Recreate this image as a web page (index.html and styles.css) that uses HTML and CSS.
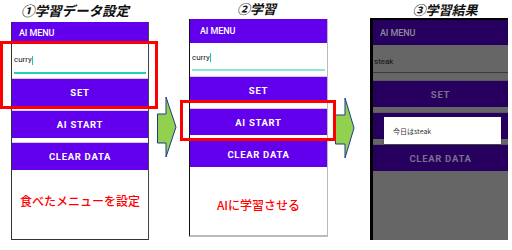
FILE: index.html
```html
<!DOCTYPE html>
<html lang="ja">
<head>
<meta charset="utf-8">
<title>AI MENU</title>
<link rel="stylesheet" href="styles.css">
</head>
<body>
<div class="page">
  <div class="col col1">
    <div class="title">①学習データ設定</div>
    <div class="phone">
      <div class="appbar">AI MENU</div>
      <div class="edit"><span class="input">curry</span><span class="caret"></span></div>
      <div class="btns">
        <div class="btn">SET</div>
        <div class="btn">AI START</div>
        <div class="btn">CLEAR DATA</div>
      </div>
      <div class="note">食べたメニューを設定</div>
    </div>
  </div>
  <div class="arrow-slot slot1">
    <svg class="arrow" width="20" height="62" viewBox="0 0 20 62"><polygon points="0.5,18 9,18 9,1 19,31 9,61 9,47 0.5,47" /></svg>
  </div>
  <div class="col col2">
    <div class="title">②学習</div>
    <div class="phone">
      <div class="appbar">AI MENU</div>
      <div class="edit"><span class="input">curry</span><span class="caret"></span></div>
      <div class="btns">
        <div class="btn">SET</div>
        <div class="btn">AI START</div>
        <div class="btn">CLEAR DATA</div>
      </div>
      <div class="note">AIに学習させる</div>
    </div>
  </div>
  <div class="arrow-slot slot2">
    <svg class="arrow" width="20" height="62" viewBox="0 0 20 62"><polygon points="0.5,18 10,18 10,1 19,31 10,61 10,47 0.5,47" /></svg>
  </div>
  <div class="col col3">
    <div class="title">③学習結果</div>
    <div class="phone dim">
      <div class="appbar">AI MENU</div>
      <div class="edit"><span class="input">steak</span></div>
      <div class="btns">
        <div class="btn">SET</div>
        <div class="btn"></div>
        <div class="btn">CLEAR DATA</div>
      </div>
      <div class="note"></div>
      <div class="dialog">今日はsteak</div>
    </div>
  </div>
  <div class="highlight hl1"></div>
  <div class="highlight hl2"></div>
</div>
</body>
</html>
```

FILE: styles.css
```css
* { box-sizing: border-box; }
html, body { margin: 0; padding: 0; background: #fff; }
body { width: 512px; height: 250px; overflow: hidden; font-family: Roboto, "Noto Sans CJK JP", sans-serif; }

.page { position: relative; display: flex; align-items: flex-start; padding-left: 11px; width: 512px; height: 250px; }

.col { display: flex; flex-direction: column; }
.col1 { width: 138px; }
.col2 { width: 139px; }
.col3 { width: 138px; }

.title {
  font-family: "Noto Sans CJK JP", sans-serif;
  font-weight: 700;
  font-style: italic;
  font-size: 13.5px;
  line-height: 20px;
  color: #111;
  text-align: center;
  white-space: nowrap;
  overflow: visible;
}
.col1 .title { height: 22px; padding-right: 10px; }
.col2 .title { height: 19px; line-height: 18px; padding-right: 4px; font-size: 13px; }
.col3 .title { height: 18px; padding-left: 12px; font-size: 13px; }

.phone { position: relative; display: flex; flex-direction: column; background: #fff; border-left: 1px solid #333; border-right: 1px solid #444; border-bottom: 1px solid #333; }
.col1 .phone { height: 218px; }
.col2 .phone { height: 218px; border-left: 1px solid #111; border-right: 1px solid #bbb; border-bottom: 2px solid #bbb; }

.appbar { background: #6200ee; color: #fff; font-size: 9px; font-weight: 500; display: flex; align-items: center; padding-left: 7px; letter-spacing: -0.1px; }
.col1 .appbar { height: 22px; }
.col2 .appbar { height: 24px; padding-left: 10px; }

.edit { position: relative; display: flex; align-items: center; padding-left: 2px; font-size: 8px; line-height: 10px; }
.edit::after { content: ""; position: absolute; left: 2px; right: 2px; height: 2px; background: #1fd0bd; }
.col1 .edit { height: 34px; padding-bottom: 2px; }
.col1 .edit::after { top: 28px; }
.col2 .edit { height: 33px; padding-bottom: 4px; }
.col2 .edit::after { top: 26px; background: #8ae6db; }
.input { font-size: 8px; color: #222; line-height: 10px; }
.caret { display: block; width: 1px; height: 9px; background: #1fc9b6; }

.btns { display: flex; flex-direction: column; gap: 4px; }
.col2 .btns { gap: 5px; }
.btn { height: 28px; background: #6200ee; border-top: 1px solid #d6c8f7; color: #fff; font-size: 9.5px; font-weight: 700; letter-spacing: 0.7px; display: flex; align-items: center; justify-content: center; }
.col2 .btn { height: 27px; }

.note { flex: 1; display: flex; justify-content: center; color: #f00; font-family: "Noto Sans CJK JP", sans-serif; font-weight: 500; font-size: 12px; line-height: 14px; }
.col1 .note { padding-top: 24px; }
.col2 .note { padding-top: 31px; }

/* dimmed (dialog shown) */
.col3 .phone { height: 222px; background: #666; border-left: 3px solid #000; border-top: 2px solid #000; border-right: none; border-bottom: none; }
.dim .appbar { height: 25px; background: #27005f; color: #8c8c99; padding-left: 7px; }
.dim .edit { height: 35px; background: #666; padding-left: 1px; padding-bottom: 2px; }
.dim .edit::after { top: 27px; left: 0; right: 0; height: 1px; background: #3a3a3a; }
.dim .input { color: #111; }
.dim .btns { gap: 5px; background: #666; }
.dim .btn { height: 27px; background: #27005f; border-top: 1px solid #5a5a62; color: #77708a; }
.dim .note { background: #666; }

.dialog { position: absolute; left: 11px; top: 97px; width: 117px; height: 27px; background: #fff; font-family: "Noto Sans CJK JP", sans-serif; font-size: 7px; color: #333; display: flex; align-items: center; padding-left: 9px; box-shadow: 0 1px 2px rgba(0,0,0,0.3); }

.arrow-slot { display: flex; justify-content: center; }
.slot1 { width: 40px; margin-top: 96px; padding-right: 4px; }
.slot2 { width: 42px; margin-top: 97px; padding-right: 8px; }
.arrow polygon { fill: #92d050; stroke: #1f3a8a; stroke-width: 1; }

.highlight { position: absolute; border: 3px solid #f00; }
.hl1 { left: 0; top: 41px; width: 158px; height: 68px; }
.hl2 { left: 180px; top: 100px; width: 156px; height: 41px; }
```
